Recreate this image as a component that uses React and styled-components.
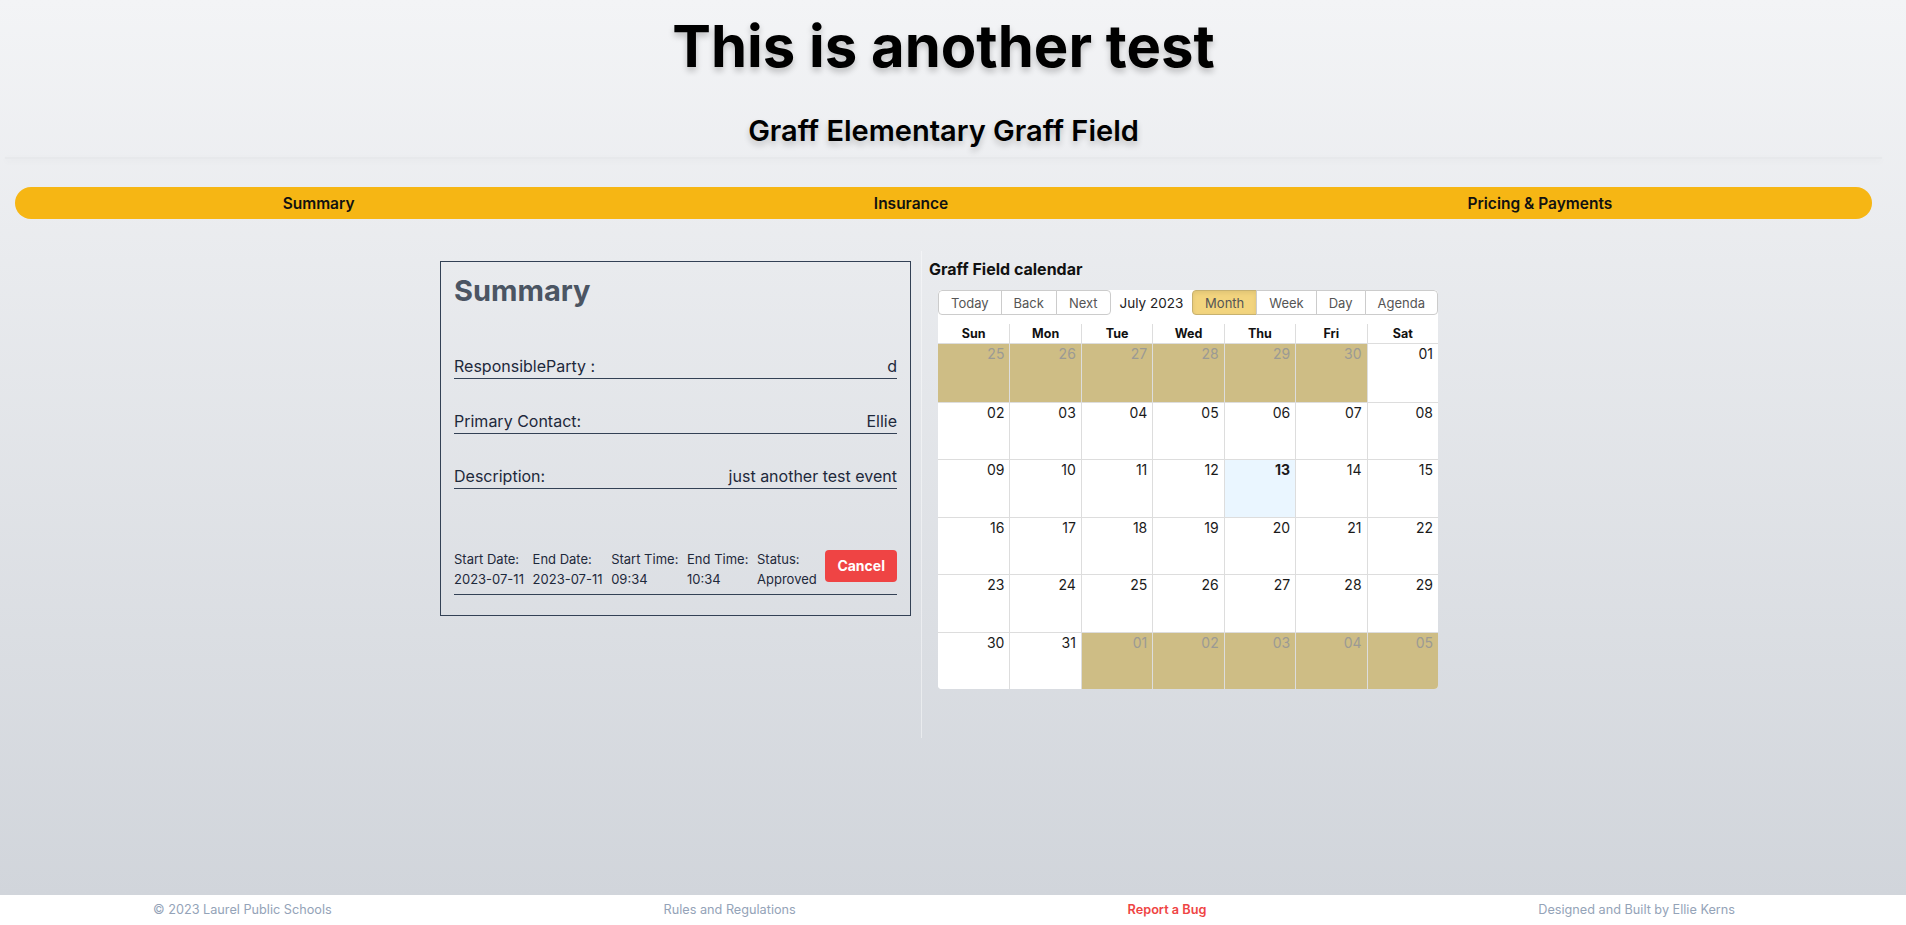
import React from 'react';
import styled, { createGlobalStyle, css } from 'styled-components';

const GlobalStyle = createGlobalStyle`
html, body {
  margin: 0;
  padding: 0;
}
body {
  font-family: Inter, "Noto Sans", sans-serif;
  color: #111;
}
::-webkit-scrollbar {
  width: 5px;
}
::-webkit-scrollbar-thumb {
  background: #f6b614;
}
::-webkit-scrollbar-track {
  background: #fcd581;
}
`

const Page = styled.div`
display: flex;
flex-direction: column;
`

const Main = styled.main`
height: 895px;
background: linear-gradient(to bottom, #f3f4f6, #d1d5db);
`

const Inner = styled.div`
width: 1887px;
display: flex;
flex-direction: column;
`

const Title = styled.h1`
margin: 16px 0 0;
font-size: 58px;
line-height: 60px;
font-weight: 700;
color: #000;
text-align: center;
text-shadow: 0 4px 6px rgba(0, 0, 0, 0.22);
`

const Subtitle = styled.h2`
margin: 37px 0 0;
font-size: 29px;
line-height: 36px;
font-weight: 600;
color: #000;
text-align: center;
text-shadow: 0 4px 6px rgba(0, 0, 0, 0.2);
`

const HeaderRule = styled.div`
margin: 8px 5px 0;
height: 2px;
background: rgba(0, 0, 0, 0.025);
box-shadow: 0 2px 6px rgba(0, 0, 0, 0.05);
`

const Nav = styled.nav`
margin: 28px 15px 0;
padding-left: 8px;
height: 32px;
border-radius: 16px;
background: #f6b614;
display: flex;
align-items: center;
justify-content: space-around;
`

const NavItem = styled.a`
font-size: 15.5px;
font-weight: 600;
color: #111;
text-decoration: none;
cursor: pointer;
`

const Content = styled.div`
margin-top: 32px;
display: flex;
justify-content: center;
align-items: flex-start;
`

const Card = styled.section`
box-sizing: border-box;
width: 471px;
margin: 10px 10px 0 0;
border: 1px solid #334155;
padding: 11px 13px 20px;
`

const CardTitle = styled.h3`
margin: 0 0 45px;
font-size: 29px;
line-height: 36px;
font-weight: 700;
color: #4b5563;
`

const InfoRow = styled.div`
display: flex;
justify-content: space-between;
margin-top: 30px;
font-size: 16px;
line-height: 24px;
color: #1e293b;
border-bottom: 1px solid #334155;
`

const MetaRow = styled.div`
margin-top: 60px;
display: flex;
justify-content: space-between;
align-items: flex-start;
padding-bottom: 5px;
border-bottom: 1px solid #334155;
font-size: 13px;
line-height: 20px;
color: #1e293b;
`

const MetaItem = styled.div`
display: flex;
flex-direction: column;
`

const CancelButton = styled.button`
margin-top: 1px;
border: none;
border-radius: 4px;
background: #ef4444;
color: #fff;
font-family: inherit;
font-size: 14px;
font-weight: 700;
line-height: 20px;
padding: 6px 12px;
cursor: pointer;
`

const CalendarColumn = styled.section`
border-left: 1px solid rgba(255, 255, 255, 0.45);
padding: 8px 9px 49px 7px;
`

const CalendarTitle = styled.h4`
margin: 0 0 11px;
font-size: 16px;
line-height: 20px;
font-weight: 700;
color: #111;
`

const Calendar = styled.div`
margin-left: 9px;
width: 500px;
height: 399px;
background: #fff;
border-radius: 4px;
display: flex;
flex-direction: column;
overflow: hidden;
font-size: 14px;
`

const Toolbar = styled.div`
display: flex;
align-items: center;
height: 25px;
margin-bottom: 9px;
`

const ButtonGroup = styled.div`
display: flex;
flex-shrink: 0;
`

const ToolButton = styled.button`
box-sizing: border-box;
height: 25px;
padding: 0 12px;
margin: 0 0 0 -1px;
border: 1px solid #ccc;
background: ${({ active }) => (active ? '#f2d47e' : '#fff')};
color: #555;
font-family: inherit;
font-size: 13px;
white-space: nowrap;
cursor: pointer;
${({ active }) => active && css`
  border-color: #c7b16f;
  box-shadow: inset 0 2px 4px rgba(0, 0, 0, 0.08);
`}
&:first-child {
  margin-left: 0;
  border-radius: 4px 0 0 4px;
}
&:last-child {
  border-radius: 0 4px 4px 0;
}
`

const ToolbarLabel = styled.span`
flex: 1;
text-align: center;
white-space: nowrap;
font-size: 13.5px;
color: #222;
`

const WeekHeader = styled.div`
display: grid;
grid-template-columns: repeat(7, 1fr);
box-sizing: border-box;
height: 20px;
border-bottom: 1px solid #ddd;
`

const HeaderCell = styled.div`
text-align: center;
font-size: 12.5px;
font-weight: 700;
line-height: 19px;
color: #111;
& + & {
  border-left: 1px solid #ddd;
}
`

const Month = styled.div`
flex: 1;
display: grid;
grid-template-rows: repeat(6, 1fr);
`

const WeekRow = styled.div`
display: grid;
grid-template-columns: repeat(7, 1fr);
& + & {
  border-top: 1px solid #ddd;
}
`

const DayCell = styled.div`
background: ${({ off, today }) => (off ? '#cebd85' : today ? '#eaf6ff' : '#fff')};
text-align: right;
padding: 0 5px;
font-size: 14px;
line-height: 20px;
color: ${({ off }) => (off ? '#9b9a94' : '#1a1a1a')};
font-weight: ${({ today }) => (today ? 700 : 400)};
& + & {
  border-left: 1px solid #ddd;
}
`

const Footer = styled.footer`
box-sizing: border-box;
background: #fff;
width: 1887px;
padding: 5px 152px 73px 153px;
display: flex;
justify-content: space-between;
font-size: 12.7px;
line-height: 20px;
color: #94a3b8;
`

const FooterLink = styled.span`
color: ${({ accent }) => (accent ? '#ef4444' : '#94a3b8')};
font-weight: ${({ accent }) => (accent ? 600 : 400)};
`

const pad = (n) => String(n).padStart(2, '0')

const buildWeeks = () => {
  const days = []
  for (let d = 25; d <= 30; d++) days.push({ n: d, off: true })
  for (let d = 1; d <= 31; d++) days.push({ n: d, off: false, today: d === 13 })
  for (let d = 1; d <= 5; d++) days.push({ n: d, off: true })
  const weeks = []
  for (let i = 0; i < days.length; i += 7) weeks.push(days.slice(i, i + 7))
  return weeks
}

const weeks = buildWeeks()
const dayNames = ['Sun', 'Mon', 'Tue', 'Wed', 'Thu', 'Fri', 'Sat']

const meta = [
  ['Start Date:', '2023-07-11'],
  ['End Date:', '2023-07-11'],
  ['Start Time:', '09:34'],
  ['End Time:', '10:34'],
  ['Status:', 'Approved'],
]

const App = () => {
  return (
    <Page>
      <GlobalStyle />
      <Main>
        <Inner>
          <Title>This is another test</Title>
          <Subtitle>Graff Elementary Graff Field</Subtitle>
          <HeaderRule />
          <Nav>
            <NavItem>Summary</NavItem>
            <NavItem>Insurance</NavItem>
            <NavItem>Pricing &amp; Payments</NavItem>
          </Nav>
          <Content>
            <Card>
              <CardTitle>Summary</CardTitle>
              <InfoRow><span>ResponsibleParty :</span><span>d</span></InfoRow>
              <InfoRow><span>Primary Contact:</span><span>Ellie</span></InfoRow>
              <InfoRow><span>Description:</span><span>just another test event</span></InfoRow>
              <MetaRow>
                {meta.map(([label, value]) => (
                  <MetaItem key={label}>
                    <span>{label}</span>
                    <span>{value}</span>
                  </MetaItem>
                ))}
                <CancelButton>Cancel</CancelButton>
              </MetaRow>
            </Card>
            <CalendarColumn>
              <CalendarTitle>Graff Field calendar</CalendarTitle>
              <Calendar>
                <Toolbar>
                  <ButtonGroup>
                    <ToolButton>Today</ToolButton>
                    <ToolButton>Back</ToolButton>
                    <ToolButton>Next</ToolButton>
                  </ButtonGroup>
                  <ToolbarLabel>July 2023</ToolbarLabel>
                  <ButtonGroup>
                    <ToolButton active>Month</ToolButton>
                    <ToolButton>Week</ToolButton>
                    <ToolButton>Day</ToolButton>
                    <ToolButton>Agenda</ToolButton>
                  </ButtonGroup>
                </Toolbar>
                <WeekHeader>
                  {dayNames.map((d) => <HeaderCell key={d}>{d}</HeaderCell>)}
                </WeekHeader>
                <Month>
                  {weeks.map((week, i) => (
                    <WeekRow key={i}>
                      {week.map((day, j) => (
                        <DayCell key={j} off={day.off} today={day.today}>{pad(day.n)}</DayCell>
                      ))}
                    </WeekRow>
                  ))}
                </Month>
              </Calendar>
            </CalendarColumn>
          </Content>
        </Inner>
      </Main>
      <Footer>
        <FooterLink>© 2023 Laurel Public Schools</FooterLink>
        <FooterLink>Rules and Regulations</FooterLink>
        <FooterLink accent>Report a Bug</FooterLink>
        <FooterLink>Designed and Built by Ellie Kerns</FooterLink>
      </Footer>
    </Page>
  );
};

export default App;
